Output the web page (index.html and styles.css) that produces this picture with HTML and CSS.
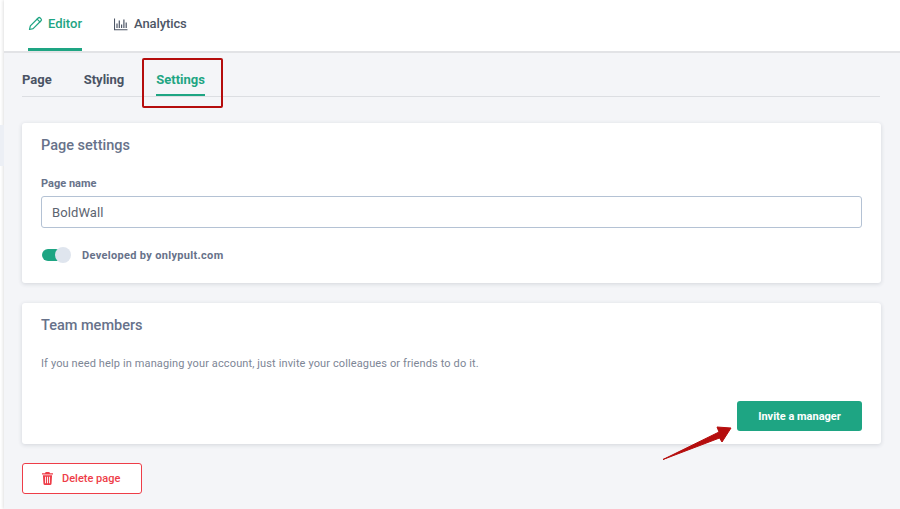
FILE: index.html
```html
<!DOCTYPE html>
<html lang="en">
<head>
    <meta charset="UTF-8">
    <meta name="viewport" content="width=device-width, initial-scale=1.0">
    <title>Page settings</title>
    <link rel="stylesheet" href="styles.css">
</head>
<body>
    <div class="kenar-isaret"></div>
    <div class="uygulama">
        <!-- Top tabs -->
        <nav class="ust-menu">
            <a class="ust-sekme aktif">
                <svg class="ikon" viewBox="0 0 16 16" width="15" height="15" fill="none" stroke="currentColor" stroke-width="1.3" stroke-linejoin="round" stroke-linecap="round">
                    <path d="M1.6 14.4l.9-3.9 8.4-8.4a1.5 1.5 0 0 1 2.1 0l.9.9a1.5 1.5 0 0 1 0 2.1l-8.4 8.4z"/>
                    <path d="M9.7 3.3l3 3"/>
                </svg>
                Editor
            </a>
            <a class="ust-sekme">
                <svg class="ikon" viewBox="0 0 14 14" width="14" height="14" fill="none" stroke="currentColor" stroke-width="1.1">
                    <path d="M.5 1.5v11.3h13"/>
                    <path d="M3 11V6.500M5.300 11V3.500M7.600 11V7.500M9.900 11V2.500M12.200 11V5.500" stroke-width="1.2"/>
                </svg>
                Analytics
            </a>
        </nav>

        <main class="icerik">
            <!-- Sub tabs -->
            <div class="alt-menu">
                <a class="alt-sekme">Page</a>
                <a class="alt-sekme">Styling</a>
                <a class="alt-sekme aktif">Settings</a>
            </div>

            <section class="kart kart-ayar">
                <h2 class="kart-baslik">Page settings</h2>
                <label class="etiket" for="sayfaAdi">Page name</label>
                <input class="girdi" id="sayfaAdi" type="text" value="BoldWall">
                <div class="anahtar-satir">
                    <span class="anahtar"><span class="anahtar-dolgu"></span><span class="anahtar-top"></span></span>
                    <span class="anahtar-yazi">Developed by onlypult.com</span>
                </div>
            </section>

            <section class="kart kart-ekip">
                <h2 class="kart-baslik">Team members</h2>
                <p class="aciklama">If you need help in managing your account, just invite your colleagues or friends to do it.</p>
                <div class="kart-alt">
                    <button class="buton-yesil">Invite a manager</button>
                </div>
            </section>

            <button class="buton-sil">
                <svg viewBox="0 0 12 14" width="11" height="13" fill="currentColor">
                    <path d="M4 0h4l.7 1.2H12v1.4H0V1.2h3.3z"/>
                    <path fill-rule="evenodd" d="M1 3.500h10l-.6 9.300a1.200 1.200 0 0 1-1.200 1.200H2.800a1.200 1.200 0 0 1-1.200-1.200zM3.400 5.200v7h1v-7zm2.100 0v7h1v-7zm2.100 0v7h1v-7z"/>
                </svg>
                Delete page
            </button>
        </main>
    </div>

    <!-- Red marks drawn over the screenshot -->
    <div class="isaret-kutu"></div>
    <svg class="isaret-ok" viewBox="0 0 70 36" width="70" height="36">
        <path d="M1 34.500L57 7 55 2 69 3 60 17 57.500 13z" fill="#b50d0d" stroke="#b50d0d" stroke-width="1" stroke-linejoin="round"/>
    </svg>
</body>
</html>
```

FILE: styles.css
```css
* {
    box-sizing: border-box;
}

body {
    margin: 0;
    height: 509px;
    overflow: hidden;
    font-family: Roboto, "Liberation Sans", sans-serif;
    background-color: #fff;
    position: relative;
}

.uygulama {
    margin-left: 4px;
    height: 509px;
    background-color: #f4f5f8;
    box-shadow: -1px 0 3px rgba(0, 0, 0, 0.12);
}

/* Top tabs */
.ust-menu {
    height: 53px;
    background-color: #fff;
    border-bottom: 2px solid #e2e3e6;
    display: flex;
    gap: 32px;
    padding-left: 24px;
}

.ust-sekme {
    height: 51px;
    display: flex;
    align-items: center;
    gap: 5px;
    padding-bottom: 4px;
    font-size: 13px;
    font-weight: 500;
    color: #4d5666;
}

.ust-sekme + .ust-sekme {
    gap: 6px;
    letter-spacing: -0.1px;
}

.ust-sekme.aktif {
    color: #1ea583;
    border-bottom: 3px solid #1ea583;
    padding-bottom: 1px;
}

.icerik {
    padding: 0 19px 0 18px;
}

/* Sub tabs */
.alt-menu {
    height: 44px;
    display: flex;
    gap: 32px;
    margin-right: 1px;
    border-bottom: 1px solid #dcdee2;
}

.alt-sekme {
    height: 43px;
    padding-top: 19px;
    font-size: 13px;
    font-weight: 700;
    line-height: 16px;
    color: #4a5364;
}

.alt-sekme.aktif {
    color: #1ea583;
    border-bottom: 2px solid #1ea583;
}

.kart {
    background-color: #fff;
    border-radius: 3px;
    box-shadow: 0 1px 4px rgba(40, 50, 70, 0.16);
    padding: 14px 19px 0;
}

.kart-ayar {
    margin-top: 26px;
    height: 160px;
}

.kart-ekip {
    margin-top: 20px;
    height: 141px;
}

.kart-baslik {
    margin: 0;
    font-size: 14.5px;
    font-weight: 500;
    line-height: 18px;
    color: #67728a;
}

.etiket {
    display: block;
    margin-top: 22px;
    font-size: 11px;
    font-weight: 700;
    line-height: 14px;
    color: #67728a;
}

.girdi {
    display: block;
    width: 100%;
    height: 32px;
    margin-top: 5px;
    padding: 0 10px;
    border: 1px solid #b4c2d4;
    border-radius: 3px;
    background-color: #fff;
    font-family: inherit;
    font-size: 13px;
    letter-spacing: 0.1px;
    color: #5c6470;
}

.anahtar-satir {
    display: flex;
    align-items: center;
    gap: 11px;
    margin-top: 19px;
    padding-left: 1px;
}

.anahtar {
    display: block;
    width: 29px;
    height: 16px;
    position: relative;
}

.anahtar-dolgu {
    position: absolute;
    left: 0;
    top: 2px;
    width: 22px;
    height: 12px;
    border-radius: 6px;
    background-color: #1ea583;
}

.anahtar-top {
    position: absolute;
    right: 0;
    top: 0;
    width: 16px;
    height: 16px;
    border-radius: 50%;
    background-color: #dfe5ee;
}

.anahtar-yazi {
    font-size: 11px;
    font-weight: 700;
    letter-spacing: 0.32px;
    color: #67728a;
}

.aciklama {
    margin: 22px 0 0;
    font-size: 11px;
    line-height: 14px;
    letter-spacing: 0.12px;
    color: #7d8696;
}

.kart-alt {
    display: flex;
    justify-content: flex-end;
    margin-top: 30px;
}

.buton-yesil {
    width: 125px;
    height: 30px;
    border: 0;
    border-radius: 3px;
    background-color: #1ea583;
    color: #fff;
    font-family: inherit;
    font-size: 11px;
    font-weight: 700;
}

.buton-sil {
    display: flex;
    align-items: center;
    gap: 9px;
    width: 120px;
    height: 31px;
    margin-top: 19px;
    padding: 0 0 0 19px;
    border: 1px solid #ee3d48;
    border-radius: 3px;
    background-color: #fff;
    color: #ee3d48;
    font-family: inherit;
    font-size: 11px;
    font-weight: 500;
}

/* Annotations */
.isaret-kutu {
    position: absolute;
    left: 142px;
    top: 58px;
    width: 81px;
    height: 50px;
    border: 2px solid #b50d0d;
    border-radius: 2px;
}

.isaret-ok {
    position: absolute;
    left: 662px;
    top: 425px;
}

.kenar-isaret {
    position: absolute;
    left: 0;
    top: 125px;
    width: 4px;
    height: 41px;
    background-color: #eceff5;
}
```
